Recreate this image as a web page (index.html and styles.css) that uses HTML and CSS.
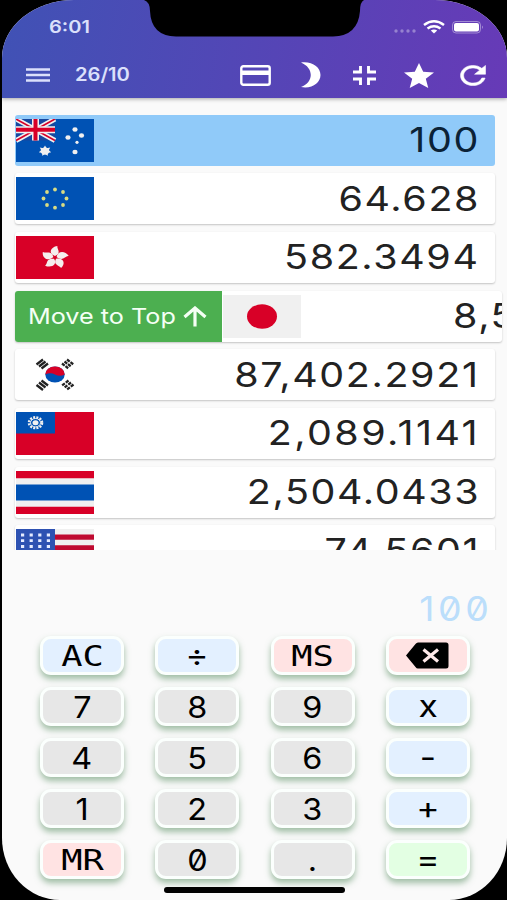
FILE: index.html
```html
<!DOCTYPE html>
<html lang="en">
<head>
<meta charset="utf-8">
<title>Currency converter</title>
<link rel="stylesheet" href="styles.css">
</head>
<body>
<div class="phone">
  <svg class="notch" viewBox="0 0 222 37"><path d="M0 0Q6 2 6 11Q7 36 32 36.500H189Q214 36 216 11Q216 2 220 0Z"/></svg>
  <header class="top">
    <div class="status">
      <span class="clock">6:01</span>
      <svg class="signals" width="92" height="16" viewBox="0 0 92 16" fill="#fff">
        <g opacity=".35"><circle cx="3" cy="12" r="1.700"/><circle cx="9" cy="12" r="1.700"/><circle cx="15" cy="12" r="1.700"/><circle cx="21" cy="12" r="1.700"/></g>
        <g fill="none" stroke="#fff" stroke-width="2.500"><path d="M31 6Q41 -1.500 51 6"/><path d="M34.500 9.500Q41 5 47.500 9.500"/></g><path d="M37.800 11.500Q41 9.500 44.200 11.500L41 14.500Z"/>
        <rect x="59.500" y="2.500" width="28" height="11.500" rx="3.500" fill="none" stroke="#fff" stroke-opacity=".4"/><rect x="61" y="4" width="25" height="8.500" rx="2"/><path d="M89 6.500q2 1.700 0 3.500z" opacity=".4"/>
      </svg>
    </div>
    <div class="toolbar">
      <svg width="24" height="14" viewBox="0 0 24 14" stroke="#dbe0fb" stroke-width="2.500"><path d="M0 1.500H24M0 7H24M0 12.500H24"/></svg>
      <span class="date">26/10</span>
      <div class="actions">
        <svg width="31" height="21" viewBox="0 0 31 21"><rect x="1.300" y="1.300" width="28.400" height="18.400" rx="2" fill="none" stroke="#fff" stroke-width="2.400"/><path d="M1 5.500H30V10H1Z" fill="#fff"/></svg>
        <svg class="moon" width="20" height="26" viewBox="0 0 20 26" fill="#fff"><path d="M0 .5C11-1 19.500 5 19.500 13S11 27 0 25C13 20 13 6 0 .500Z"/></svg>
        <svg width="23" height="19" viewBox="0 0 23 19" fill="none" stroke="#fff" stroke-width="2.900"><path d="M0 6H7.500V0M15.500 0V6H23M0 13H7.500V19M15.500 19V13H23"/></svg>
        <svg width="30" height="25" viewBox="2 2 20 19" preserveAspectRatio="none" fill="#fff"><path d="M12 17.270L18.180 21l-1.640-7.030L22 9.240l-7.190-.610L12 2 9.190 8.630 2 9.240l5.460 4.730L5.820 21z"/></svg>
        <svg width="26" height="21" viewBox="3.700 3.700 16.600 16.600" preserveAspectRatio="none" fill="#fff" stroke="#fff" stroke-width=".4"><path d="M17.650 6.350A7.958 7.958 0 0 0 12 4c-4.420 0-7.990 3.580-7.990 8s3.570 8 7.990 8c3.730 0 6.840-2.550 7.730-6h-2.080A5.990 5.990 0 0 1 12 18c-3.310 0-6-2.690-6-6s2.690-6 6-6c1.660 0 3.140.690 4.220 1.780L13 11h7V4l-2.350 2.350z"/></svg>
      </div>
    </div>
  </header>

  <main class="list">
    <div class="row selected">
      <svg class="flag" viewBox="0 0 78 43"><rect width="78" height="43" fill="#0052b4"/><rect width="39" height="21.500" fill="#17479e"/><path d="M0 0L39 21.500M39 0L0 21.500" stroke="#f0f0f0" stroke-width="5"/><path d="M0 0L39 21.500M39 0L0 21.500" stroke="#d80027" stroke-width="1.600"/><path d="M0 10.700H39M19.500 0V21.500" stroke="#f0f0f0" stroke-width="7"/><path d="M0 10.700H39M19.500 0V21.500" stroke="#d80027" stroke-width="4"/>
        <g fill="#f0f0f0"><path d="M29 26.500l1.700 2.700 3.500-.7-1.400 2.700 2.400 2-3.500.8.200 2.800-2.900-1.600-2.900 1.600.2-2.800-3.500-.8 2.400-2-1.400-2.700 3.500.7z"/><ellipse cx="29" cy="32" rx="4.200" ry="3.600"/><ellipse cx="59" cy="10.500" rx="2.600" ry="2.200"/><ellipse cx="52" cy="18.500" rx="2.600" ry="2.200"/><ellipse cx="65.500" cy="16.500" rx="2.600" ry="2.200"/><circle cx="61" cy="23.300" r="1.600"/><ellipse cx="59" cy="33" rx="2.600" ry="2.200"/></g></svg>
      <span class="value">100</span>
    </div>
    <div class="row">
      <svg class="flag" viewBox="0 0 78 43"><rect width="78" height="43" fill="#0052b4"/><g fill="#d9dc83"><circle cx="39" cy="12.500" r="1.900"/><circle cx="47" cy="15" r="1.900"/><circle cx="50.500" cy="21.500" r="1.900"/><circle cx="47" cy="28" r="1.900"/><circle cx="39" cy="30.700" r="1.900"/><circle cx="31" cy="28" r="1.900"/><circle cx="27.500" cy="21.500" r="1.900"/><circle cx="31" cy="15" r="1.900"/></g></svg>
      <span class="value">64.628</span>
    </div>
    <div class="row">
      <svg class="flag" viewBox="0 0 78 43"><rect width="78" height="43" fill="#d80027"/><g fill="#f5eeee" transform="translate(39 21.500) scale(1.180 1)"><path id="petal" d="M0-1.500C-6-4-4-10.500 2-11.500C1.500-8 6-5 0-1.500Z"/><use href="#petal" transform="rotate(72)"/><use href="#petal" transform="rotate(144)"/><use href="#petal" transform="rotate(216)"/><use href="#petal" transform="rotate(288)"/></g></svg>
      <span class="value">582.3494</span>
    </div>
    <div class="row swiped">
      <div class="move"><span class="move-label">Move to Top</span><svg width="24" height="21" viewBox="0 0 24 21" fill="none" stroke="#f4fff4" stroke-width="3.200"><path d="M12 20.500V2M1.500 11L12 2L22.500 11"/></svg></div>
      <svg class="flag" viewBox="0 0 78 43"><rect width="78" height="43" fill="#f0f0f0"/><ellipse cx="39" cy="21.500" rx="15" ry="12.200" fill="#d80027"/></svg>
      <span class="value">8,5</span>
    </div>
    <div class="row">
      <svg class="flag" viewBox="0 0 78 43"><ellipse cx="39" cy="21.500" rx="9.700" ry="8" fill="#0052b4"/><path d="M29.300 21.500a9.700 8 0 0 1 19.400 0q-5 2.500-9.700 0t-9.700 0" fill="#d80027"/>
        <g stroke="#222" stroke-width="2.300" fill="none"><path d="M20.500 11.500L27 6.500M23 13.500L29.500 8.500M25.500 15.500L32 10.500"/><path d="M20.500 32L27 37M23 29.500L29.500 34.500M25.500 27.500L32 32.500"/><path d="M51 6.500L57.500 11.500M48.500 8.500L55 13.500M46 10.500L52.500 15.500" stroke-dasharray="3.400 1"/><path d="M57.500 31.500L51 36.500M55 29.500L48.500 34.500M52.500 27.500L46 32.500" stroke-dasharray="3.400 1.200"/></g></svg>
      <span class="value">87,402.2921</span>
    </div>
    <div class="row">
      <svg class="flag" viewBox="0 0 78 43"><rect width="78" height="43" fill="#d80027"/><rect width="39" height="21.500" fill="#0052b4"/><ellipse cx="19.500" cy="10.700" rx="6.600" ry="5.400" fill="none" stroke="#f0f0f0" stroke-width="2.400" stroke-dasharray="2 1.200"/><ellipse cx="19.500" cy="10.700" rx="5" ry="4.200" fill="none" stroke="#f0f0f0"/><ellipse cx="19.500" cy="10.700" rx="3" ry="2.500" fill="#f0f0f0"/></svg>
      <span class="value airy">2,089.1141</span>
    </div>
    <div class="row">
      <svg class="flag" viewBox="0 0 78 43"><rect width="78" height="43" fill="#f0f0f0"/><path d="M0 0H78V7.200H0ZM0 35.800H78V43H0Z" fill="#d80027"/><rect y="13.500" width="78" height="16" fill="#0052b4"/></svg>
      <span class="value">2,504.0433</span>
    </div>
    <div class="row">
      <svg class="flag" viewBox="0 0 78 43"><rect width="78" height="43" fill="#f0f0f0"/><path d="M0 5.400H78V10.800H0ZM0 16.200H78V21.600H0ZM0 27H78V32.400H0ZM0 37.800H78V43H0Z" fill="#bf0a30"/><rect width="39" height="23" fill="#2e52b2"/><path d="M5 6H36M5 11.700H36M5 17.500H36" stroke="#e6ecff" stroke-width="2.800" stroke-dasharray="3.200 5.400"/></svg>
      <span class="value">74.5601</span>
    </div>
  </main>

  <div class="display"><span>100</span></div>

  <div class="keys">
    <button class="key blue"><span class="mono">AC</span></button><button class="key blue"><span class="op">÷</span></button><button class="key red"><span class="mono">MS</span></button>
    <button class="key red"><svg width="43" height="27" viewBox="0 0 43 27"><path d="M12 .5H40Q42.500 .5 42.500 3V24Q42.500 26.500 40 26.500H12Q10.500 26.500 9.500 25L0 13.500L9.500 2Q10.500 .500 12 .500Z"/><path d="M17.500 7.500L32 19.500M32 7.500L17.500 19.500" stroke="#ffe9e9" stroke-width="3.200"/></svg></button>
    <button class="key"><span>7</span></button><button class="key"><span>8</span></button><button class="key"><span>9</span></button><button class="key blue"><span class="op">x</span></button>
    <button class="key"><span>4</span></button><button class="key"><span>5</span></button><button class="key"><span>6</span></button><button class="key blue"><span class="op">-</span></button>
    <button class="key"><span>1</span></button><button class="key"><span>2</span></button><button class="key"><span>3</span></button><button class="key blue"><span class="op">+</span></button>
    <button class="key red"><span class="mono">MR</span></button><button class="key"><span>0</span></button><button class="key"><span>.</span></button><button class="key green"><span class="op">=</span></button>
  </div>
  <div class="home"></div>
</div>
</body>
</html>
```

FILE: styles.css
```css
* { box-sizing: border-box; }
body {
  margin: 0;
  height: 900px;
  overflow: hidden;
  background: #000;
  font-family: Inter, "Liberation Sans", sans-serif;
}
.phone {
  position: relative;
  display: flex;
  flex-direction: column;
  width: 505px;
  height: 900px;
  margin-left: 2px;
  overflow: hidden;
  background: #fafafa;
  border-radius: 72px 72px 58px 58px / 58px 58px 62px 62px;
}
.notch { position: absolute; left: 142px; top: 0; width: 222px; height: 37px; }
.top {
  flex: none;
  height: 98px;
  background: linear-gradient(100deg, #4052b5, #673ab7);
  box-shadow: 0 1px 4px rgba(0, 0, 0, .35);
  color: #fff;
}
.status { display: flex; justify-content: space-between; align-items: center; height: 34px; padding: 19px 22px 0 47px; }
.clock { font-size: 17px; font-weight: 600; line-height: 18px; color: #dbe0fb; transform: scaleX(1.18); transform-origin: left; }
.toolbar { display: flex; align-items: center; height: 44px; margin-top: 19px; padding-left: 24px; }
.date { width: 60px; margin-left: 25px; font-size: 18px; font-weight: 600; line-height: 44px; color: #dbe0fb; transform: scaleX(1.12); transform-origin: left; }
.actions { display: grid; grid-template-columns: repeat(5, 54.5px); justify-items: center; align-items: center; margin-left: 93px; }
.moon { margin-left: 2px; }
.list { flex: none; display: flex; flex-direction: column; gap: 7.7px; height: 452px; padding: 16.5px 5px 0 12.5px; overflow: hidden; }
.row {
  flex: none;
  display: flex;
  align-items: center;
  justify-content: space-between;
  width: 480.5px;
  height: 51px;
  padding: 0 15px 0 1.2px;
  background: #fff;
  border-radius: 3px;
  box-shadow: 0 1px 2px rgba(0, 0, 0, .22);
}
.selected { background: #90caf9; box-shadow: none; }
.flag { flex: none; width: 78px; height: 43px; }
.value { font-size: 34px; line-height: 50px; letter-spacing: 1.4px; color: #222; transform: scaleX(1.16); transform-origin: right; white-space: nowrap; }
.airy { letter-spacing: 2.1px; }
.selected .value { color: #0b2237; }
.swiped { width: 487px; padding: 0; justify-content: flex-start; overflow: hidden; }
.swiped .value { margin-left: 152px; transform-origin: left; }
.move { flex: none; display: flex; align-items: center; width: 207.5px; height: 52px; margin-right: 1px; padding-left: 13px; background: #4caf50; color: #f4fff4; }
.move-label { width: 155px; font-size: 22px; white-space: nowrap; transform: scaleX(1.145); transform-origin: left; }
.display { flex: none; display: flex; justify-content: flex-end; height: 85.5px; padding: 34px 15px 0 0; }
.display span { height: 50px; font-size: 34px; line-height: 50px; font-feature-settings: "zero"; letter-spacing: 3.2px; color: #bbdefb; transform: scaleX(1.1); transform-origin: right; }
.keys { display: grid; grid-template-columns: repeat(4, 84px); grid-auto-rows: 39px; gap: 12.2px 31.3px; padding-left: 38px; }
.key {
  display: flex;
  align-items: center;
  justify-content: center;
  padding: 0;
  border: 3px solid #fbfffd;
  border-radius: 11px;
  background: #e7e7e7;
  box-shadow: 0 4px 6px rgba(70, 130, 80, .5);
  color: #000;
  font-family: inherit;
  font-size: 30px;
  line-height: 33px;
  font-feature-settings: "zero";
}
.key span { padding-top: 2px; transform: scaleX(1.08); }
.key .mono { font-family: "DejaVu Sans Mono", monospace; font-size: 29px; transform: scaleX(1.22); }
.key .op { padding-top: 0; transform: scaleX(1.18); }
.blue { background: #e3f0ff; }
.red { background: #ffe3e3; }
.green { background: #e3ffe3; }
.home { position: absolute; left: 162px; top: 887px; width: 181px; height: 6px; border-radius: 3px; background: #000; }
```
